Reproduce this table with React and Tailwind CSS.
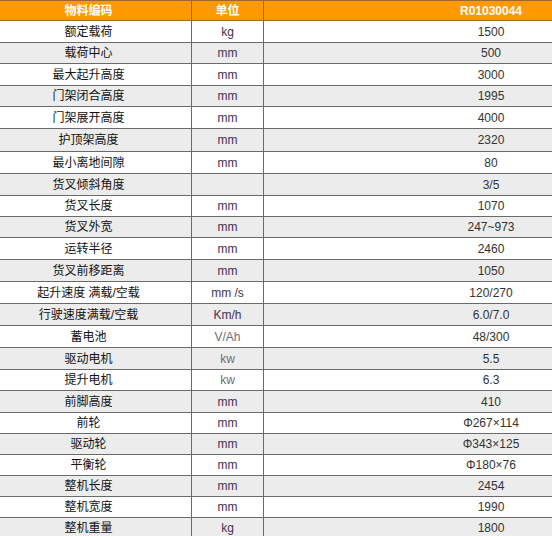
const rows = [
  ["额定载荷", "kg", "1500", 22],
  ["载荷中心", "mm", "500", 21],
  ["最大起升高度", "mm", "3000", 22],
  ["门架闭合高度", "mm", "1995", 21],
  ["门架展开高度", "mm", "4000", 22],
  ["护顶架高度", "mm", "2320", 23],
  ["最小离地间隙", "mm", "80", 22],
  ["货叉倾斜角度", "", "3/5", 22],
  ["货叉长度", "mm", "1070", 21],
  ["货叉外宽", "mm", "247~973", 21],
  ["运转半径", "mm", "2460", 22],
  ["货叉前移距离", "mm", "1050", 22],
  ["起升速度 满载/空载", "mm /s", "120/270", 22],
  ["行驶速度满载/空载", "Km/h", "6.0/7.0", 22],
  ["蓄电池", "V/Ah", "48/300", 22],
  ["驱动电机", "kw", "5.5", 22],
  ["提升电机", "kw", "6.3", 21],
  ["前脚高度", "mm", "410", 22],
  ["前轮", "mm", "Φ267×114", 21],
  ["驱动轮", "mm", "Φ343×125", 21],
  ["平衡轮", "mm", "Φ180×76", 21],
  ["整机长度", "mm", "2454", 21],
  ["整机宽度", "mm", "1990", 21],
  ["整机重量", "kg", "1800", 21],
];

const heightClass = {
  21: "h-[21px]",
  22: "h-[22px]",
  23: "h-[23px]",
};

export default function App() {
  return (
    <div className="w-[552px] h-[536px] overflow-hidden bg-white">
      <div
        className="w-[732px] -ml-[14px] text-[12px] leading-none"
        style={{ fontFamily: '"Liberation Sans", Arial, "Noto Sans CJK SC", sans-serif' }}
      >
        <div className="grid grid-cols-[206px_72px_454px] h-[21px] bg-[#ff9900] border-t border-b border-[#9a6a2c] text-white font-bold">
          <div className="flex items-center justify-center border-r border-[#8a6a40]">物料编码</div>
          <div className="flex items-center justify-center border-r border-[#8a6a40]">单位</div>
          <div className="flex items-center justify-center">R01030044</div>
        </div>
        {rows.map(([name, unit, value, h], i) => (
          <div
            key={i}
            className={`grid grid-cols-[206px_72px_454px] border-b border-[#6a6a6a] ${heightClass[h]} ${
              i % 2 === 0 ? "bg-white" : "bg-[#ececec]"
            }`}
          >
            <div className="flex items-center justify-center border-r border-[#6a6a6a] text-[#111]">{name}</div>
            <div
              className={`flex items-center justify-center border-r border-[#6a6a6a] ${
                unit === "V/Ah" || unit === "kw" ? "text-[#6f6a78]" : "text-[#45304f]"
              }`}
            >
              {unit}
            </div>
            <div className="flex items-center justify-center text-[#333]">{value}</div>
          </div>
        ))}
      </div>
    </div>
  );
}
